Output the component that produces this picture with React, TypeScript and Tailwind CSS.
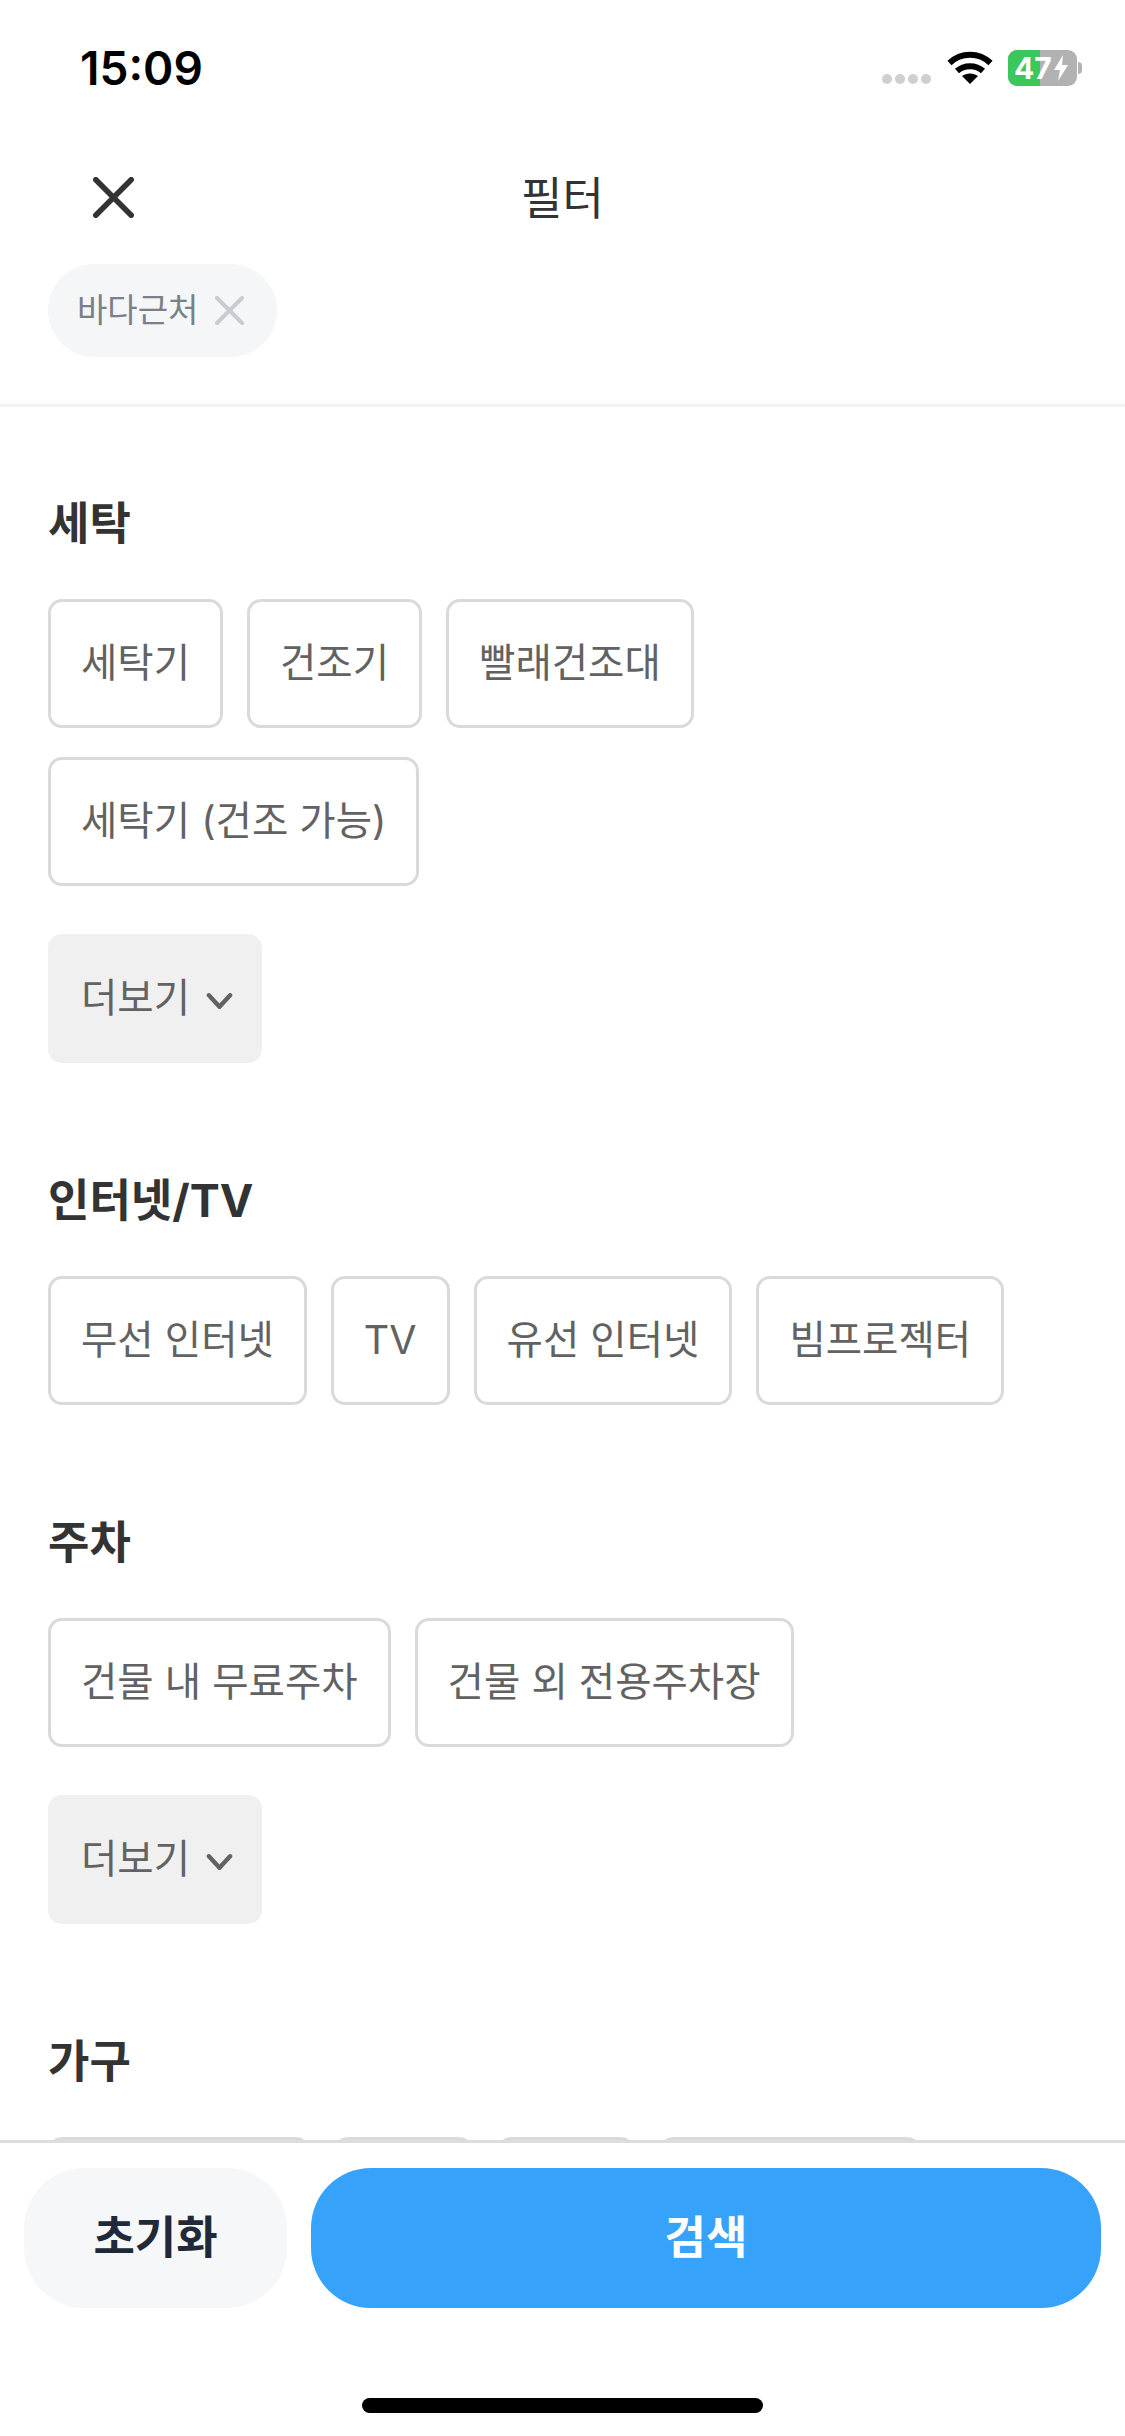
const sections = [
  { title: '세탁', items: ['세탁기', '건조기', '빨래건조대', '세탁기 (건조 가능)'], more: true },
  { title: '인터넷/TV', items: ['무선 인터넷', 'TV', '유선 인터넷', '빔프로젝터'], more: false },
  { title: '주차', items: ['건물 내 무료주차', '건물 외 전용주차장'], more: true },
  { title: '가구', items: ['소파/테이블', '침대', '책상', '옷장/서랍장'], more: false },
];

function CloseIcon({ className }: { className: string }) {
  return (
    <svg viewBox="0 0 44 44" fill="none" stroke="currentColor" strokeLinecap="round" className={className}>
      <path d="M3 3 L41 41 M41 3 L3 41" strokeWidth="6" />
    </svg>
  );
}

function StatusBar() {
  return (
    <div className="flex h-[136px] shrink-0 items-center justify-between pl-[80px] pr-[43px]">
      <span className="text-[46px] font-semibold leading-none text-black">15:09</span>
      <div className="flex items-center">
        <div className="mt-[22px] flex gap-[3px]">
          <span className="h-[10px] w-[10px] rounded-full bg-[#cfcfcf]" />
          <span className="h-[10px] w-[10px] rounded-full bg-[#cfcfcf]" />
          <span className="h-[10px] w-[10px] rounded-full bg-[#cfcfcf]" />
          <span className="h-[10px] w-[10px] rounded-full bg-[#cfcfcf]" />
        </div>
        <svg viewBox="0 0 46 34" className="ml-[16px] h-[34px] w-[46px]" fill="none" stroke="#000" strokeWidth="6">
          <path d="M2.5 12 C14 1 32 1 43.5 12" />
          <path d="M10 20 C17 13.5 29 13.5 36 20" />
          <path d="M23 33 L15 25 C19.5 21.5 26.5 21.5 31 25 Z" fill="#000" stroke="none" />
        </svg>
        <div className="relative ml-[15px] flex h-[36px] w-[69px] overflow-hidden rounded-[9px] bg-[#b2b2b2]">
          <div className="h-full w-[32px] bg-[#3cc75c]" />
          <div className="absolute inset-0 flex items-center pl-[6px] text-[30px] font-bold leading-none text-white">
            47
            <svg viewBox="0 0 16 26" className="ml-[1px] h-[26px] w-[16px]" fill="#fff">
              <path d="M10 0 L1 15 H7 L5 26 L15 10 H9 Z" />
            </svg>
          </div>
        </div>
        <span className="ml-[1px] h-[12px] w-[4px] rounded-r-full bg-[#b2b2b2]" />
      </div>
    </div>
  );
}

function Chip({ label }: { label: string }) {
  return (
    <button className="flex h-[129px] items-center rounded-[14px] border-[3px] border-[#dadada] bg-white px-[30px] text-[39.5px] text-[#626262]">
      {label}
    </button>
  );
}

function MoreButton() {
  return (
    <button className="mt-[48px] flex h-[129px] items-center gap-[16px] rounded-[14px] bg-[#f0f0f0] pl-[33px] pr-[29px] text-[39.5px] text-[#626262]">
      더보기
      <svg viewBox="0 0 28 18" fill="none" stroke="currentColor" strokeWidth="4.5" strokeLinecap="round" strokeLinejoin="round" className="mt-[5px] h-[18px] w-[27px]">
        <path d="M3 3 L14 15 L25 3" />
      </svg>
    </button>
  );
}

export default function App() {
  return (
    <div className="flex h-[2436px] w-[1125px] flex-col overflow-hidden bg-white font-['Inter','Noto_Sans_CJK_KR',sans-serif]">
      <StatusBar />

      {/* Header */}
      <div className="relative flex h-[122px] shrink-0 items-center justify-center">
        <button className="absolute left-[93px] top-[41px] text-[#333333]">
          <CloseIcon className="h-[41px] w-[41px]" />
        </button>
        <h1 className="pt-[3px] text-[45px] font-normal text-[#333333]">필터</h1>
      </div>

      {/* Selected filters */}
      <div className="shrink-0 border-b-[3px] border-[#f2f2f2] px-[48px] pb-[47px] pt-[6px]">
        <div className="flex h-[93px] w-[229px] items-center gap-[17px] rounded-full bg-[#f5f6f8] pl-[29px]">
          <span className="text-[33px] text-[#7b8088]">바다근처</span>
          <CloseIcon className="h-[29px] w-[29px] text-[#c8ccd1]" />
        </div>
      </div>

      {/* Filter groups */}
      <div className="min-h-0 flex-1 overflow-hidden px-[48px] pt-[84px]">
        {sections.map((section) => (
          <section key={section.title} className="mb-[105px]">
            <h2 className="mb-[42px] text-[45px] font-bold leading-[66px] text-[#333333]">{section.title}</h2>
            <div className="flex flex-wrap gap-x-[24px] gap-y-[29px]">
              {section.items.map((item) => (
                <Chip key={item} label={item} />
              ))}
            </div>
            {section.more && <MoreButton />}
          </section>
        ))}
      </div>

      {/* Footer */}
      <div className="flex h-[296px] shrink-0 flex-col border-t-[3px] border-[#dddddd] bg-white">
        <div className="flex gap-[24px] px-[24px] pt-[25px]">
          <button className="h-[140px] w-[263px] rounded-[60px] bg-[#f5f7f9] text-[45px] font-bold text-[#1f2937]">초기화</button>
          <button className="h-[140px] flex-1 rounded-[60px] bg-[#36a2fa] text-[45px] font-bold text-white">검색</button>
        </div>
        <div className="mx-auto mt-[90px] h-[15px] w-[401px] rounded-full bg-black" />
      </div>
    </div>
  );
}
